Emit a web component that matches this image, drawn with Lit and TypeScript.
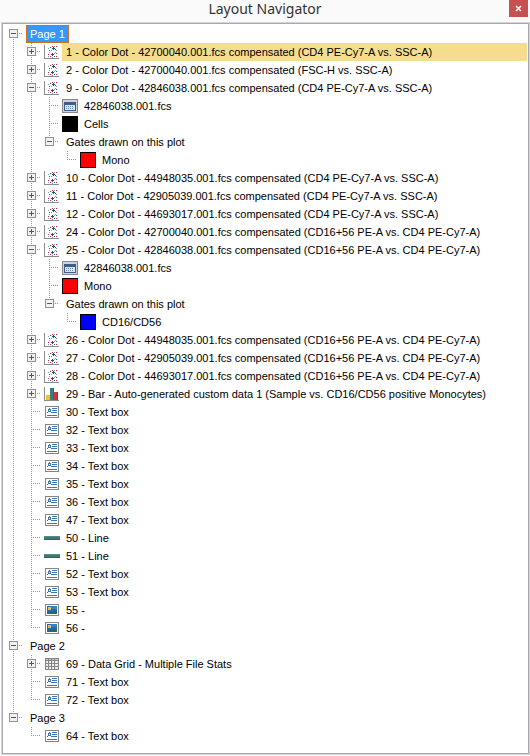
import { LitElement, html, css, svg, nothing } from "lit";
import { customElement } from "lit/decorators.js";
import { classMap } from "lit/directives/class-map.js";

type Icon = "dot" | "bar" | "text" | "line" | "image" | "grid" | "file" | "black" | "red" | "blue";
interface TreeNode {
  label: string;
  icon?: Icon;
  state?: "open" | "closed";
  selected?: boolean;
  current?: boolean;
  children?: TreeNode[];
}

const plot = (n: number, file: string, axes: string, extra: Partial<TreeNode> = {}): TreeNode => ({
  label: `${n} - Color Dot - ${file}.001.fcs compensated (${axes})`,
  icon: "dot",
  state: "closed",
  ...extra,
});
const textBox = (n: number): TreeNode => ({ label: `${n} - Text box`, icon: "text" });
const gates = (label: string, icon: Icon): TreeNode => ({
  label: "Gates drawn on this plot",
  state: "open",
  children: [{ label, icon }],
});
const SSC = "CD4 PE-Cy7-A vs. SSC-A";
const CD16 = "CD16+56 PE-A vs. CD4 PE-Cy7-A";

const TREE: TreeNode[] = [
  {
    label: "Page 1",
    state: "open",
    selected: true,
    children: [
      plot(1, "42700040", SSC, { current: true }),
      plot(2, "42700040", "FSC-H vs. SSC-A"),
      plot(9, "42846038", SSC, {
        state: "open",
        children: [
          { label: "42846038.001.fcs", icon: "file" },
          { label: "Cells", icon: "black" },
          gates("Mono", "red"),
        ],
      }),
      plot(10, "44948035", SSC),
      plot(11, "42905039", SSC),
      plot(12, "44693017", SSC),
      plot(24, "42700040", CD16),
      plot(25, "42846038", CD16, {
        state: "open",
        children: [
          { label: "42846038.001.fcs", icon: "file" },
          { label: "Mono", icon: "red" },
          gates("CD16/CD56", "blue"),
        ],
      }),
      plot(26, "44948035", CD16),
      plot(27, "42905039", CD16),
      plot(28, "44693017", CD16),
      {
        label: "29 - Bar - Auto-generated custom data 1 (Sample vs. CD16/CD56 positive Monocytes)",
        icon: "bar",
        state: "closed",
      },
      ...[30, 32, 33, 34, 35, 36, 47].map(textBox),
      { label: "50 - Line", icon: "line" },
      { label: "51 - Line", icon: "line" },
      textBox(52),
      textBox(53),
      { label: "55 -", icon: "image" },
      { label: "56 -", icon: "image" },
    ],
  },
  {
    label: "Page 2",
    state: "open",
    children: [
      { label: "69 - Data Grid - Multiple File Stats", icon: "grid", state: "closed" },
      textBox(71),
      textBox(72),
    ],
  },
  { label: "Page 3", state: "open", children: [textBox(64)] },
];

const dots = (color: string, points: number[][]) =>
  svg`${points.map(([x, y]) => svg`<rect x=${x} y=${y} width="1" height="1" fill=${color} />`)}`;

const swatch = (color: string) =>
  svg`<rect width="16" height="16" fill="#000" /><rect x="1" y="1" width="14" height="14" fill=${color} />`;

const ICONS: Record<Icon, unknown> = {
  dot: svg`
    <path d="M0 1h1v13h14v1H0z" fill="#8c8c8c" />
    ${dots("#d02238", [[6, 3], [12, 2], [11, 5], [5, 6], [4, 10], [6, 12], [12, 12], [12, 9], [8, 2]])}
    ${dots("#254e78", [[9, 3], [8, 4], [9, 4], [10, 4], [9, 5], [8, 9], [7, 10], [8, 10], [9, 10], [8, 11], [10, 12]])}
    ${dots("#6fa5a8", [[10, 2], [7, 6], [12, 6], [5, 8], [11, 8], [4, 12], [8, 13], [10, 9], [4, 4]])}`,
  bar: svg`
    <path d="M0 1h1v13h14v1H0z" fill="#8c8c8c" />
    <path d="M2 9h4v5H2z" fill="#f4bd25" />
    <path d="M6 2h4v12H6z" fill="#397f7c" />
    <path d="M10 6h4v8h-4z" fill="#c53940" />
    <path d="M9 2h1v12H9zM13 6h1v8h-1z" fill="#000" opacity=".15" />`,
  text: svg`
    <rect x="1.5" y="2.5" width="13" height="11" fill="#fff" stroke="#858585" />
    <path d="M3 9 5 4h1l2 5H7V8H4v1zM5 7h1V6H5z" fill="#3178b9" />
    <path d="M8 4h5v1H8zM8 6h5v1H8zM8 8h5v1H8zM3 11h10v1H3z" fill="#3f76b5" />`,
  line: svg`
    <path d="M0 6h16v4H0z" fill="#3f7774" /><path d="M0 6h16v1H0z" fill="#568b87" /><path d="M0 9h16v1H0z" fill="#2e6561" />`,
  image: svg`
    <rect x="1.5" y="2.5" width="13" height="11" fill="#fff" stroke="#858585" />
    <path d="M3 4h10v8H3z" fill="#2969ad" />
    <path d="M7 4h6v3H7z" fill="#3b82bd" />
    <path d="M3 10h4l3-1h3v3H3z" fill="#2d666a" />
    <path d="M4 5h3v3H4z" fill="#e9bd4c" />`,
  grid: svg`
    <path d="M1 2h14v12H1z" fill="#858585" />
    <path d="M2 3h2v1H2zM5 3h2v1H5zM8 3h2v1H8zM11 3h3v1h-3z" fill="#c9c9c9" />
    <path d="M2 5h2v2H2zM5 5h2v2H5zM8 5h2v2H8zM11 5h3v2h-3zM2 8h2v2H2zM5 8h2v2H5zM8 8h2v2H8zM11 8h3v2h-3zM2 11h2v2H2zM5 11h2v2H5zM8 11h2v2H8zM11 11h3v2h-3z" fill="#ececec" />`,
  file: svg`
    <rect x=".5" y="1.5" width="15" height="13" fill="#d2d2d2" stroke="#8a8a8a" />
    <path d="M2 4h12v9H2z" fill="#405d87" />
    <path d="M3 7h10v5H3z" fill="#dbe6f4" />
    <path d="M4 8.5h8M4 10.5h8" stroke="#6685b5" stroke-dasharray="1 1" />`,
  black: swatch("#000"),
  red: swatch("#f00"),
  blue: swatch("#00f"),
};

@customElement("app-root")
export class AppRoot extends LitElement {
  static styles = css`
    :host {
      display: flex;
      flex-direction: column;
      box-sizing: border-box;
      min-height: 100vh;
      background: #fafafa;
      color: #000;
      font: 11px/18px "Liberation Sans", Arial, sans-serif;
    }
    .titlebar {
      display: grid;
      grid-template-columns: 1fr auto 1fr;
      height: 23px;
    }
    h1 {
      grid-column: 2;
      margin: 0;
      font: 400 14px/18px "Noto Sans", "Open Sans", sans-serif;
      color: #333;
    }
    .close {
      justify-self: end;
      width: 19px;
      height: 17px;
      margin-right: 2px;
      padding: 0;
      border: 0;
      background: #c75050;
      color: #fff;
      display: grid;
      place-items: center;
    }
    .panel {
      flex: 1;
      margin: 0 1px 2px 2px;
      padding: 1px 1px 8px;
      border: 1px solid #a6a8ae;
      box-shadow: 0 0 0 1px #d6d6da;
      background: #fff;
    }
    .row {
      display: flex;
      height: 18px;
    }
    .cell {
      flex: none;
      width: 18px;
      display: block;
    }
    .toggle {
      flex: none;
      width: 18px;
      height: 18px;
      padding: 0;
      border: 0;
      background: none;
      display: block;
    }
    .guide {
      display: block;
      width: 18px;
      height: 18px;
    }
    .icon {
      flex: none;
      width: 16px;
      height: 16px;
      margin: 1px 2px 0 4px;
      shape-rendering: crispEdges;
    }
    .label {
      padding: 0 4px;
      white-space: nowrap;
    }
    .bare {
      margin-left: 4px;
    }
    .current {
      flex: 1;
      background: #f5dd90;
    }
    .selected {
      background: #3399ff;
      color: #fff;
      outline: 1px dotted #c8701c;
      outline-offset: -1px;
    }
  `;

  private guide(up: boolean, down: boolean, across: boolean, state?: "open" | "closed") {
    return html`<svg class="guide" viewBox="0 0 18 18" shape-rendering="crispEdges" aria-hidden="true">
      <g stroke="#949494" stroke-dasharray="1 1">
        ${up ? svg`<path d="M9.5 0v9" />` : nothing}
        ${down ? svg`<path d="M9.5 10v8" />` : nothing}
        ${across ? svg`<path d="M9 8.5h10" />` : nothing}
      </g>
      ${state
        ? svg`<rect x="5.5" y="4.5" width="8" height="8" fill="#f2f2f2" stroke="#919191" />
            <path d="M7 8h5v1H7z" fill="#3c55a0" />`
        : nothing}
      ${state === "closed" ? svg`<path d="M9 6h1v5H9z" fill="#3c55a0" />` : nothing}
    </svg>`;
  }

  private rows(nodes: TreeNode[], trail: boolean[] = []): unknown {
    return nodes.map((node, i) => {
      const last = i === nodes.length - 1;
      const up = trail.length > 0 || i > 0;
      const own = this.guide(up, !last, true, node.state);
      return html`
        <div
          class="row"
          role="treeitem"
          aria-level=${trail.length + 1}
          aria-selected=${node.selected ? "true" : "false"}
          aria-expanded=${node.state ? String(node.state === "open") : nothing}
        >
          ${trail.map((line) => html`<span class="cell">${this.guide(line, line, false)}</span>`)}
          ${node.state
            ? html`<button class="toggle" type="button" aria-label=${`Toggle ${node.label}`}>${own}</button>`
            : html`<span class="cell">${own}</span>`}
          ${node.icon
            ? html`<svg class="icon" viewBox="0 0 16 16" aria-hidden="true">${ICONS[node.icon]}</svg>`
            : nothing}
          <span
            class=${classMap({ label: true, bare: !node.icon, current: !!node.current, selected: !!node.selected })}
            >${node.label}</span
          >
        </div>
        ${node.children ? this.rows(node.children, [...trail, !last]) : nothing}
      `;
    });
  }

  render() {
    return html`
      <header class="titlebar">
        <h1>Layout Navigator</h1>
        <button class="close" type="button" aria-label="Close">
          <svg width="7" height="7" viewBox="0 0 7 7" aria-hidden="true">
            <path d="M1 1l5 5M6 1 1 6" stroke="#fff" stroke-width="1.6" />
          </svg>
        </button>
      </header>
      <main class="panel" role="tree" aria-label="Layout Navigator">${this.rows(TREE)}</main>
    `;
  }
}
